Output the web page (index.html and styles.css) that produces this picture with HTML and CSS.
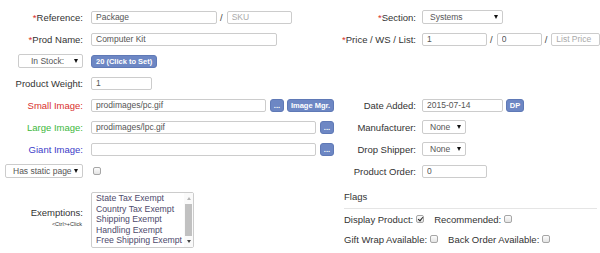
FILE: index.html
```html
<!DOCTYPE html>
<html lang="en">
<head>
    <meta charset="UTF-8">
    <meta name="viewport" content="width=device-width, initial-scale=1.0">
    <title>Edit Product</title>
    <link rel="stylesheet" href="styles.css">
</head>
<body>

    <div class="form">
        <div class="row">
            <div class="half left">
                <label class="lbl"><span class="req">*</span>Reference:</label>
                <div class="ctl">
                    <input class="txt w-ref" value="Package">
                    <span class="sep">/</span>
                    <input class="txt w-sku" placeholder="SKU">
                </div>
            </div>
            <div class="half right">
                <label class="lbl"><span class="req">*</span>Section:</label>
                <div class="ctl">
                    <div class="sel w-section"><select><option>Systems</option></select><span class="caret"></span></div>
                </div>
            </div>
        </div>

        <div class="row">
            <div class="half left">
                <label class="lbl"><span class="req">*</span>Prod Name:</label>
                <div class="ctl"><input class="txt w-name" value="Computer Kit"></div>
            </div>
            <div class="half right">
                <label class="lbl lbl-wide"><span class="req">*</span>Price / WS / List:</label>
                <div class="ctl">
                    <input class="txt w-price" value="1">
                    <span class="sep">/</span>
                    <input class="txt w-ws" value="0">
                    <span class="sep">/</span>
                    <input class="txt w-list" placeholder="List Price">
                </div>
            </div>
        </div>

        <div class="row">
            <div class="half left">
                <div class="lbl">
                    <div class="sel w-stock"><select class="centered"><option>In Stock:</option></select><span class="caret"></span></div>
                </div>
                <div class="ctl"><button class="btn">20 (Click to Set)</button></div>
            </div>
        </div>

        <div class="row">
            <div class="half left">
                <label class="lbl">Product Weight:</label>
                <div class="ctl"><input class="txt w-weight" value="1"></div>
            </div>
        </div>

        <div class="row">
            <div class="half left">
                <label class="lbl red">Small Image:</label>
                <div class="ctl">
                    <input class="txt w-small" value="prodimages/pc.gif">
                    <button class="btn btn-dots">...</button>
                    <button class="btn btn-mgr">Image Mgr.</button>
                </div>
            </div>
            <div class="half right">
                <label class="lbl">Date Added:</label>
                <div class="ctl">
                    <input class="txt w-date" value="2015-07-14">
                    <button class="btn btn-dp">DP</button>
                </div>
            </div>
        </div>

        <div class="row">
            <div class="half left">
                <label class="lbl green">Large Image:</label>
                <div class="ctl">
                    <input class="txt w-large" value="prodimages/lpc.gif">
                    <button class="btn btn-dots">...</button>
                </div>
            </div>
            <div class="half right">
                <label class="lbl">Manufacturer:</label>
                <div class="ctl">
                    <div class="sel w-none"><select><option>None</option></select><span class="caret"></span></div>
                </div>
            </div>
        </div>

        <div class="row">
            <div class="half left">
                <label class="lbl blue">Giant Image:</label>
                <div class="ctl">
                    <input class="txt w-large" value="">
                    <button class="btn btn-dots">...</button>
                </div>
            </div>
            <div class="half right">
                <label class="lbl">Drop Shipper:</label>
                <div class="ctl">
                    <div class="sel w-none"><select><option>None</option></select><span class="caret"></span></div>
                </div>
            </div>
        </div>

        <div class="row">
            <div class="half left">
                <div class="lbl">
                    <div class="sel w-static"><select><option>Has static page</option></select><span class="caret"></span></div>
                </div>
                <div class="ctl"><input type="checkbox" class="chk chk-static"></div>
            </div>
            <div class="half right">
                <label class="lbl">Product Order:</label>
                <div class="ctl"><input class="txt w-order" value="0"></div>
            </div>
        </div>

        <div class="bottom">
            <div class="half left exempt">
                <div class="lbl">
                    Exemptions:
                    <small>&lt;Ctrl&gt;+Click</small>
                </div>
                <div class="listbox">
                    <div class="options">
                        <div>State Tax Exempt</div>
                        <div>Country Tax Exempt</div>
                        <div>Shipping Exempt</div>
                        <div>Handling Exempt</div>
                        <div>Free Shipping Exempt</div>
                    </div>
                    <div class="scrollbar">
                        <span class="arrow-up"></span>
                        <span class="thumb"></span>
                        <span class="arrow-down"></span>
                    </div>
                </div>
            </div>

            <div class="half flags">
                <div class="legend">Flags</div>
                <div class="flag-row">
                    <label>Display Product:</label><input type="checkbox" class="chk" checked>
                    <label>Recommended:</label><input type="checkbox" class="chk">
                </div>
                <div class="flag-row">
                    <label>Gift Wrap Available:</label><input type="checkbox" class="chk">
                    <label>Back Order Available:</label><input type="checkbox" class="chk">
                </div>
            </div>
        </div>
    </div>

</body>
</html>
```

FILE: styles.css
```css
body {
    margin: 0;
    padding: 6px 0 0 0;
    font-family: "Liberation Sans", Arial, sans-serif;
    font-size: 9.5px;
    color: #333;
    background-color: #fff;
}
.row {
    display: flex;
    height: 22px;
    align-items: center;
}
.half {
    display: flex;
    align-items: center;
}
.left {
    width: 336px;
    flex: none;
}
.right {
    flex: 1;
}
.lbl {
    flex: none;
    display: flex;
    justify-content: flex-end;
    align-items: center;
    white-space: nowrap;
}
.left .lbl {
    width: 83px;
    margin-right: 8px;
}
.right .lbl {
    width: 80px;
    margin-right: 6px;
}
.req {
    color: #d9302c;
}
.red { color: #d9302c; }
.green { color: #3cb83c; }
.blue { color: #3c3cc8; }

.ctl {
    display: flex;
    align-items: center;
}
.sep {
    margin: 0 4px 0 3px;
    color: #444;
}
.txt {
    box-sizing: border-box;
    height: 13px;
    border: 1px solid #ccc;
    border-radius: 2px;
    padding: 0 4px;
    font-family: inherit;
    font-size: 8.5px;
    color: #555;
    background-color: #fff;
    outline: none;
}
.txt::placeholder {
    color: #aaa;
}
.w-ref { width: 126px; }
.w-sku { width: 65px; }
.w-name { width: 186px; }
.w-weight { width: 61px; }
.w-small { width: 175px; }
.w-large { width: 225px; }
.w-price { width: 65px; }
.w-ws { width: 45px; }
.w-list { width: 49px; }
.w-date { width: 81px; }
.w-order { width: 65px; }

.sel {
    position: relative;
    height: 14px;
}
.sel select {
    appearance: none;
    -webkit-appearance: none;
    box-sizing: border-box;
    width: 100%;
    height: 100%;
    border: 1px solid #ccc;
    border-radius: 2px;
    background-color: #fff;
    font-family: inherit;
    font-size: 8.5px;
    color: #555;
    padding: 0 0 0 7px;
    outline: none;
}
.sel select.centered {
    padding-left: 12px;
}
.caret {
    position: absolute;
    right: 5px;
    top: 5px;
    width: 0;
    height: 0;
    border-left: 2.5px solid transparent;
    border-right: 2.5px solid transparent;
    border-top: 4px solid #111;
}
.w-section { width: 81px; }
.w-none { width: 44px; }
.w-stock { width: 65px; }
.w-static { width: 78px; }

.btn {
    box-sizing: border-box;
    height: 13px;
    border: 1px solid #5f79b6;
    border-radius: 3px;
    background-color: #6d87c4;
    color: #fff;
    font-family: "Liberation Sans", Arial, sans-serif;
    font-size: 7.5px;
    font-weight: bold;
    padding: 0 4px;
    cursor: pointer;
}
.btn-dots {
    width: 14px;
    padding: 0;
    margin-left: 4px;
    line-height: 9px;
}
.btn-mgr {
    width: 47px;
    padding: 0;
    margin-left: 3px;
}
.btn-dp {
    width: 18px;
    padding: 0;
    margin-left: 3px;
}

.chk {
    appearance: none;
    -webkit-appearance: none;
    box-sizing: border-box;
    width: 8px;
    height: 8px;
    margin: 0 10px 0 3px;
    border: 1px solid #a6a6a6;
    border-radius: 2px;
    background: linear-gradient(#fcfcfc, #e4e4e4);
    position: relative;
}
.chk:checked::after {
    content: "";
    position: absolute;
    left: 1.5px;
    top: -0.5px;
    width: 2px;
    height: 4px;
    border-right: 1.3px solid #222;
    border-bottom: 1.3px solid #222;
    transform: rotate(40deg);
}
.chk-static {
    margin-left: 2px;
}

.bottom {
    display: flex;
    padding-top: 9px;
}
.exempt {
    align-items: center;
}
.exempt .lbl {
    flex-direction: column;
    align-items: flex-end;
    padding-bottom: 6px;
}
.exempt small {
    font-size: 5.5px;
    margin-top: 3px;
    margin-right: 1px;
}
.listbox {
    display: flex;
    box-sizing: border-box;
    width: 103px;
    height: 56px;
    border: 1px solid #ccc;
    border-radius: 2px;
}
.options {
    flex: 1;
    padding: 0 0 0 4px;
    color: #4d4a6c;
    font-size: 8.7px;
    line-height: 10.5px;
    overflow: hidden;
    white-space: nowrap;
}
.scrollbar {
    width: 9px;
    display: flex;
    flex-direction: column;
    align-items: center;
    background-color: #fafafa;
    padding: 2px 0;
}
.arrow-up {
    width: 0;
    height: 0;
    margin-top: 2px;
    border-left: 2px solid transparent;
    border-right: 2px solid transparent;
    border-bottom: 3px solid #b5b5b5;
}
.thumb {
    width: 7px;
    height: 32px;
    margin-top: 4px;
    background-color: #c1c1c1;
}
.arrow-down {
    width: 0;
    height: 0;
    margin-top: auto;
    margin-bottom: 2px;
    border-left: 2px solid transparent;
    border-right: 2px solid transparent;
    border-top: 3px solid #444;
}

.flags {
    flex: 1;
    flex-direction: column;
    align-items: stretch;
    padding: 0 3px 0 8px;
}
.legend {
    font-size: 9.5px;
    line-height: 12px;
    padding-bottom: 5px;
    border-bottom: 1px solid #e5e5e5;
    color: #333;
}
.flag-row {
    display: flex;
    align-items: center;
    height: 20px;
}
.flag-row:first-of-type {
    margin-top: 1px;
}
```
